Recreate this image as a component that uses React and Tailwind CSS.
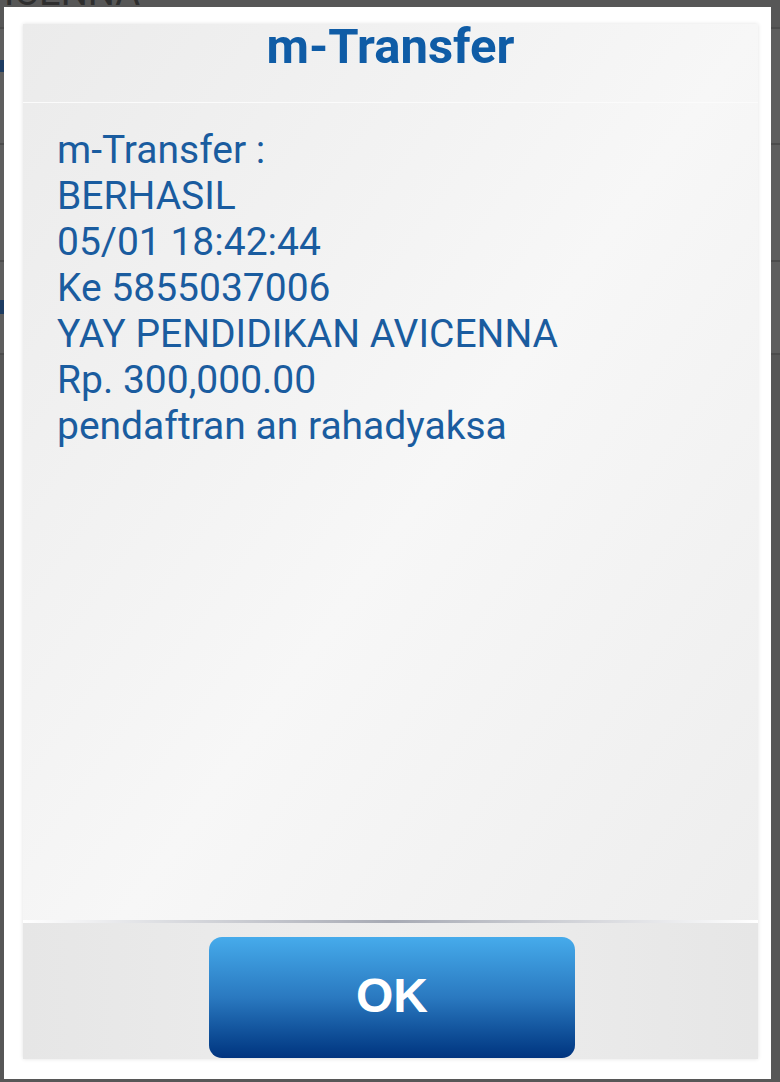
import React from 'react';

// Lines of the transfer receipt
const receiptLines = [
  'm-Transfer :',
  'BERHASIL',
  '05/01 18:42:44',
  'Ke 5855037006',
  'YAY PENDIDIKAN AVICENNA',
  'Rp. 300,000.00',
  'pendaftran an rahadyaksa',
];

// Dimmed app screen behind the dialog
const BackdropRows = () => (
  <div className="flex flex-col">
    <div className="h-[29px] overflow-hidden border-b-2 border-[#4c4c4c]">
      <div className="flex w-[140px] justify-end overflow-hidden">
        <p className="-mt-[27px] whitespace-nowrap text-[38px] leading-[38px] text-[#2e2e2e] [font-family:Roboto,sans-serif]">AVICENNA</p>
      </div>
    </div>
    <div className="flex h-[116px] items-start border-b-2 border-[#4c4c4c] bg-[#5e5e5e] pt-[31px]">
      <div className="h-[12px] w-[4px] bg-[#1d3c62]"></div>
    </div>
    <div className="h-[117px] border-b-2 border-[#4c4c4c] bg-[#5e5e5e]"></div>
    <div className="flex h-[93px] items-start border-b-2 border-[#4c4c4c] bg-[#5e5e5e] pt-[38px]">
      <div className="h-[14px] w-[4px] bg-[#1d3c62]"></div>
    </div>
  </div>
);

export default function App() {
  return (
    <div className="relative h-[1082px] w-[780px] overflow-hidden bg-[#575757] [font-family:Roboto,sans-serif]">
      <BackdropRows />

      {/* Modal dialog */}
      <div className="absolute inset-0 pl-[4px] pt-[7px]">
        <div className="flex h-[1072px] w-[767px] flex-col bg-white pb-[20px] pl-[19px] pr-[13px] pt-[17px]">
          <div className="flex flex-1 flex-col bg-gradient-to-br from-[#ebebeb] via-[#f7f7f7] to-[#ececec] shadow-[0_0_4px_rgba(0,0,0,0.12)]">
            {/* Title */}
            <div className="h-[79px] border-b border-[#fbfbfb]">
              <h1 className="text-center text-[49px] font-bold leading-[46px] text-[#0f5ca6]">m-Transfer</h1>
            </div>

            {/* Message body */}
            <div className="flex-1 pl-[34px] pt-[24px]">
              {receiptLines.map((line) => (
                <p key={line} className="text-[39px] leading-[46px] text-[#1a5c9f]">{line}</p>
              ))}
            </div>

            <div className="h-[3px] bg-gradient-to-r from-white via-[#a7aab4] to-white"></div>

            {/* Button bar */}
            <div className="flex h-[136px] justify-center bg-gradient-to-r from-[#e6e6e6] via-[#eeeeee] to-[#e6e6e6] pl-[3px] pt-[14px]">
              <button className="flex h-[121px] w-[366px] items-center justify-center rounded-[13px] bg-gradient-to-b from-[#46abeb] via-[#2a79c0] to-[#02347f] pb-[3px] text-[48px] font-bold text-white [font-family:'Liberation_Sans',Arial,sans-serif]">
                OK
              </button>
            </div>
          </div>
        </div>
      </div>
    </div>
  );
}
